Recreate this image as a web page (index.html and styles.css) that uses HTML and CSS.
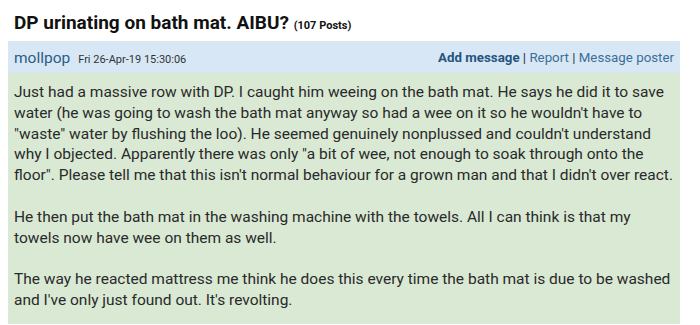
FILE: index.html
```html
<!DOCTYPE html>
<html lang="en">
<head>
    <meta charset="UTF-8">
    <meta name="viewport" content="width=device-width, initial-scale=1.0">
    <title>DP urinating on bath mat. AIBU?</title>
    <link rel="stylesheet" href="styles.css">
</head>
<body>
    <h1 class="thread-title">DP urinating on bath mat. AIBU? <span class="post-count">(107 Posts)</span></h1>

    <div class="post">
        <div class="post-header">
            <div class="poster">
                <span class="nick">mollpop</span>
                <span class="post-date">Fri 26-Apr-19 15:30:06</span>
            </div>
            <div class="post-links">
                <a class="add" href="#">Add message</a> | <a href="#">Report</a> | <a href="#">Message poster</a>
            </div>
        </div>
        <div class="post-body">
            <p>Just had a massive row with DP. I caught him weeing on the bath mat. He says he did it to save water (he was going to wash the bath mat anyway so had a wee on it so he wouldn't have to "waste" water by flushing the loo). He seemed genuinely nonplussed and couldn't understand why I objected. Apparently there was only "a bit of wee, not enough to soak through onto the floor". Please tell me that this isn't normal behaviour for a grown man and that I didn't over react.</p>
            <p>He then put the bath mat in the washing machine with the towels. All I can think is that my towels now have wee on them as well.</p>
            <p>The way he reacted mattress me think he does this every time the bath mat is due to be washed and I've only just found out. It's revolting.</p>
        </div>
    </div>
</body>
</html>
```

FILE: styles.css
```css
body {
    font-family: Roboto, "Liberation Sans", sans-serif;
    margin: 0;
    padding: 0 20px 0 8px;
    background: #fff;
    color: #222;
}

.thread-title {
    margin: 0;
    padding: 11px 0 0 6px;
    height: 30px;
    font-size: 19px;
    font-weight: bold;
    color: #111;
}

.post-count {
    font-size: 11px;
}

.post-header {
    display: flex;
    justify-content: space-between;
    align-items: center;
    height: 32px;
    padding: 0 6px;
    background: #d7e7f6;
}

.nick {
    font-size: 15.5px;
    color: #2c5d86;
    margin-right: 4px;
}

.post-date {
    font-size: 11px;
    color: #333;
}

.post-links {
    font-size: 13.3px;
    color: #333;
}

.post-links a {
    color: #3c6e96;
    text-decoration: none;
}

.post-links a.add {
    font-weight: bold;
    color: #25557d;
}

.post-body {
    background: #d9e9d4;
    padding: 9px 6px 13px;
    font-size: 15.5px;
    line-height: 20.8px;
    color: #2a2a2a;
}

.post-body p {
    margin: 0 0 20.8px;
}

.post-body p:last-child {
    margin-bottom: 0;
}
```
